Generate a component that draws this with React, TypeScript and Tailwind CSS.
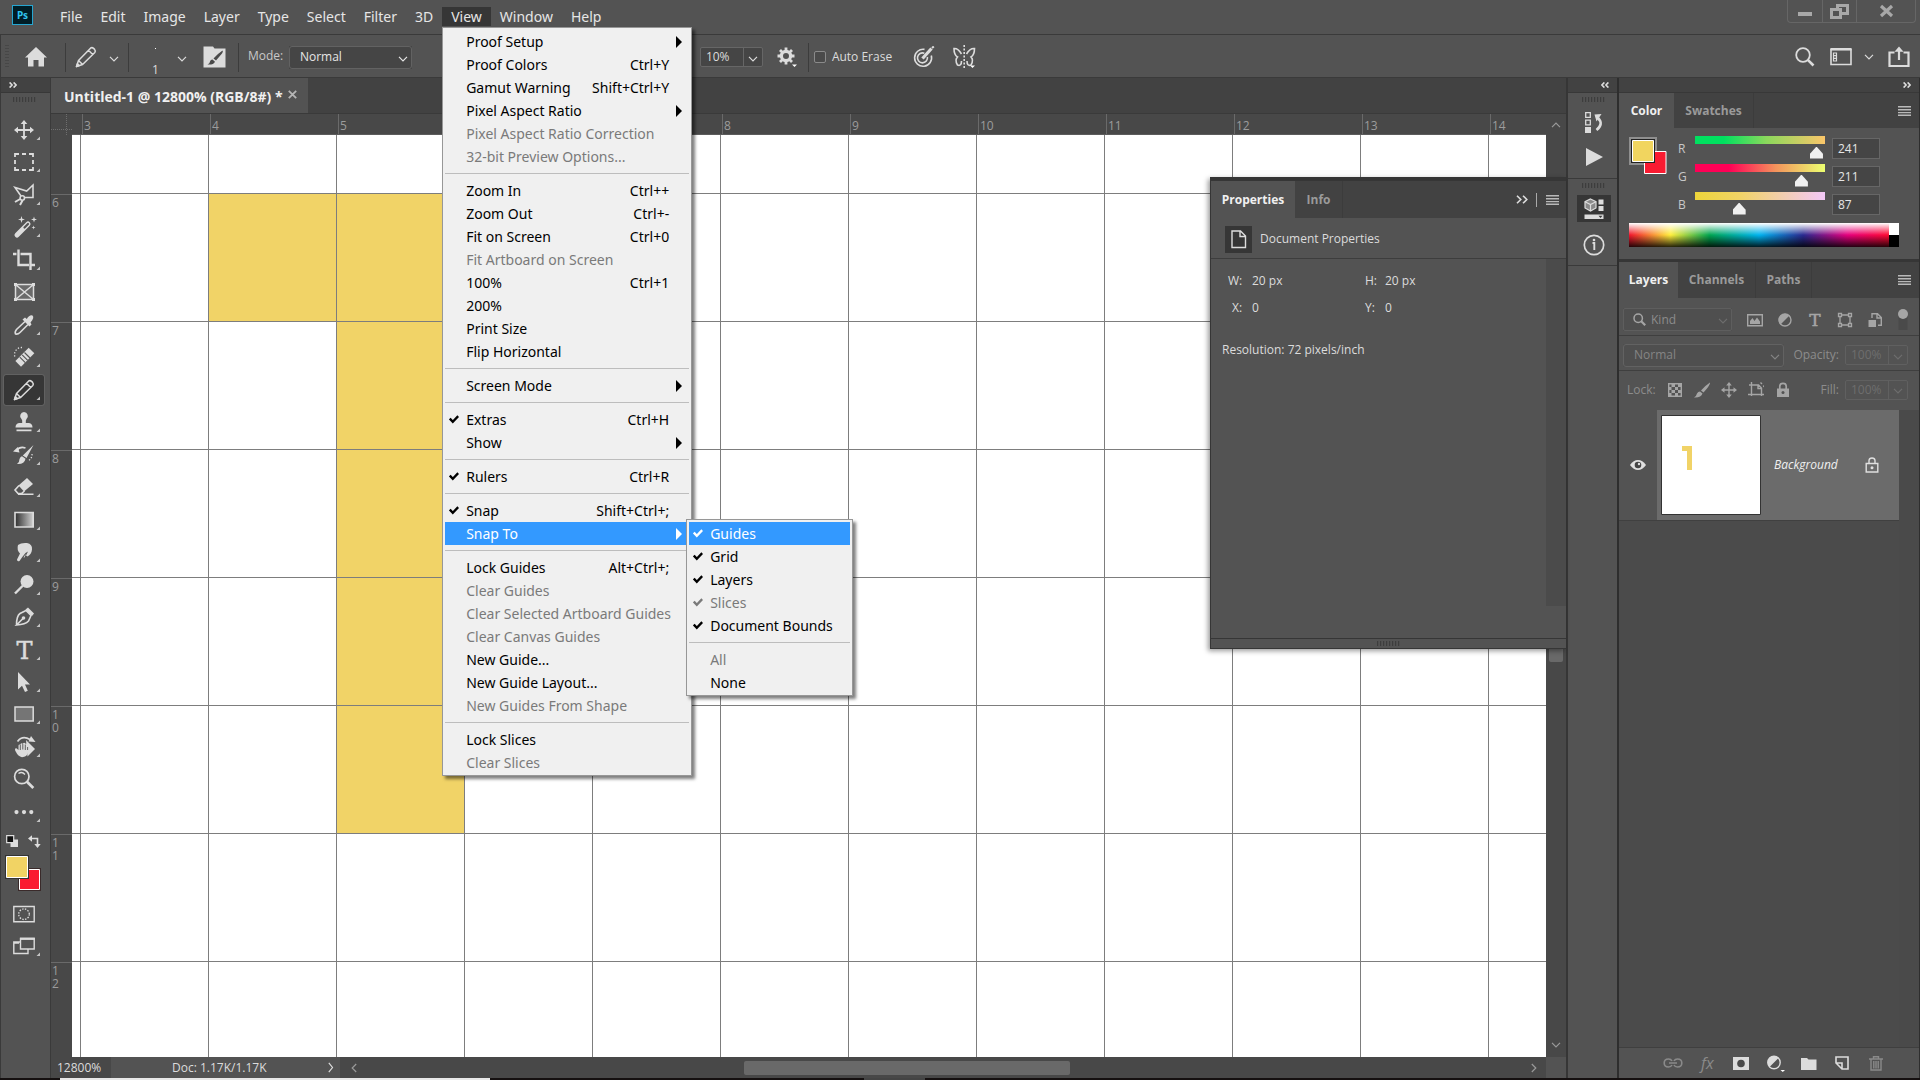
import { useState, type ReactNode } from 'react'
import clsx from 'clsx'

interface MenuEntry {
  label: string
  keys?: string
  disabled?: boolean
  checked?: boolean
  arrow?: boolean
  sub?: MenuItem[]
}

type MenuItem = MenuEntry | 'sep'

const snapMenu: MenuItem[] = [
  { label: 'Guides', checked: true },
  { label: 'Grid', checked: true },
  { label: 'Layers', checked: true },
  { label: 'Slices', checked: true, disabled: true },
  { label: 'Document Bounds', checked: true },
  'sep',
  { label: 'All', disabled: true },
  { label: 'None' },
]

const viewMenu: MenuItem[] = [
  { label: 'Proof Setup', arrow: true },
  { label: 'Proof Colors', keys: 'Ctrl+Y' },
  { label: 'Gamut Warning', keys: 'Shift+Ctrl+Y' },
  { label: 'Pixel Aspect Ratio', arrow: true },
  { label: 'Pixel Aspect Ratio Correction', disabled: true },
  { label: '32-bit Preview Options...', disabled: true },
  'sep',
  { label: 'Zoom In', keys: 'Ctrl++' },
  { label: 'Zoom Out', keys: 'Ctrl+-' },
  { label: 'Fit on Screen', keys: 'Ctrl+0' },
  { label: 'Fit Artboard on Screen', disabled: true },
  { label: '100%', keys: 'Ctrl+1' },
  { label: '200%' },
  { label: 'Print Size' },
  { label: 'Flip Horizontal' },
  'sep',
  { label: 'Screen Mode', arrow: true },
  'sep',
  { label: 'Extras', keys: 'Ctrl+H', checked: true },
  { label: 'Show', arrow: true },
  'sep',
  { label: 'Rulers', keys: 'Ctrl+R', checked: true },
  'sep',
  { label: 'Snap', keys: 'Shift+Ctrl+;', checked: true },
  { label: 'Snap To', arrow: true, sub: snapMenu },
  'sep',
  { label: 'Lock Guides', keys: 'Alt+Ctrl+;' },
  { label: 'Clear Guides', disabled: true },
  { label: 'Clear Selected Artboard Guides', disabled: true },
  { label: 'Clear Canvas Guides', disabled: true },
  { label: 'New Guide...' },
  { label: 'New Guide Layout...' },
  { label: 'New Guides From Shape', disabled: true },
  'sep',
  { label: 'Lock Slices' },
  { label: 'Clear Slices', disabled: true },
]

const menus = ['File', 'Edit', 'Image', 'Layer', 'Type', 'Select', 'Filter', '3D', 'View', 'Window', 'Help']

function MenuList({ items, active }: { items: MenuItem[]; active: string }) {
  return (
    <ul role="menu" className="border border-[#979797] bg-[#f0f0f0] px-[2px] pt-[2px] pb-[1px] shadow-[3px_3px_3px_rgba(0,0,0,0.5)]">
      {items.map((item, i) => {
        if (item === 'sep') {
          return (
            <li key={i} role="separator" className="flex h-[11px] items-center">
              <span className="h-px w-full bg-[#bdbdbd]" />
            </li>
          )
        }
        const on = item.label === active
        return (
          <li key={i} role="none" className="relative">
            <button
              type="button"
              role="menuitem"
              disabled={item.disabled}
              className={clsx(
                'flex h-[23px] w-full items-center whitespace-nowrap text-left text-sm',
                on ? 'bg-[#3399ff] text-white' : item.disabled ? 'text-[#7a7a7a]' : 'text-black',
              )}
            >
              <span className="w-[21px] shrink-0 pl-1">
                {item.checked && (
                  <svg width="10" height="9" viewBox="0 0 10 9" fill="none" stroke="currentColor" strokeWidth="2.4">
                    <path d="M.8 3.6 3.8 6.8 9.2 1.2" />
                  </svg>
                )}
              </span>
              <span className="grow">{item.label}</span>
              <span>{item.keys}</span>
              <span className="flex w-5 shrink-0 justify-center">
                {item.arrow && (
                  <svg width="6" height="12" viewBox="0 0 6 12" fill="currentColor">
                    <path d="M0 0 6 6 0 12z" />
                  </svg>
                )}
              </span>
            </button>
            {item.sub && (
              <div className="absolute -top-[3px] left-[241px] z-10 w-[167px]">
                <MenuList items={item.sub} active="Guides" />
              </div>
            )}
          </li>
        )
      })}
    </ul>
  )
}

function MenuBar() {
  return (
    <header className="flex h-[34px] shrink-0 items-start bg-[#535353] pl-3 font-['Noto_Sans',sans-serif] text-[#e6e6e6]">
      <div className="mt-[5px] flex h-[20px] w-[21px] items-center justify-center border border-[#26a6d1] bg-[#001d26] text-[10px] font-bold text-[#31c5f0]">
        Ps
      </div>
      <nav className="mt-[7px] ml-[18px] flex">
        {menus.map((m) => (
          <div key={m} className="relative">
            <button type="button" className={clsx('block h-[19px] px-[9px] text-sm leading-[18px]', m === 'View' && 'bg-[#363636]')}>
              {m}
            </button>
            {m === 'View' && (
              <div className="absolute top-[20px] left-0 z-30 w-[250px]">
                <MenuList items={viewMenu} active="Snap To" />
              </div>
            )}
          </div>
        ))}
      </nav>
      <div className="mr-[4px] ml-auto flex h-[23px] rounded-b border border-t-0 border-[#666] text-[#a8a8a8]">
        <button type="button" aria-label="Minimize" className="w-[35px] border-r border-[#666]">
          <svg width="34" height="22" fill="currentColor">
            <path d="M10 12h14v4H10z" />
          </svg>
        </button>
        <button type="button" aria-label="Restore" className="w-[34px] border-r border-[#666]">
          <svg width="33" height="22" fill="none" stroke="currentColor" strokeWidth="3">
            <path d="M8.500 9.500h9v8h-9zM14.500 9V5.500h10v8H18" />
          </svg>
        </button>
        <button type="button" aria-label="Close" className="w-[58px]">
          <svg width="58" height="22" fill="none" stroke="currentColor" strokeWidth="3.200">
            <path d="M24 6 35 16M35 6 24 16" />
          </svg>
        </button>
      </div>
    </header>
  )
}

function Chevron({ className }: { className?: string }) {
  return (
    <svg width="10" height="6" viewBox="0 0 10 6" fill="none" stroke="currentColor" strokeWidth="1.2" className={className}>
      <path d="M1 .8 5 4.800 9 .8" />
    </svg>
  )
}

function Picker({ label, value, className }: { label: string; value: string; className: string }) {
  return (
    <div className={clsx('relative', className)}>
      <select
        aria-label={label}
        defaultValue={value}
        className="h-full w-full appearance-none rounded-[3px] border border-[#626262] bg-inherit pl-[10px]"
      >
        <option>{value}</option>
      </select>
      <Chevron className="pointer-events-none absolute top-[10px] right-1" />
    </div>
  )
}

function Percent({ label, value, className }: { label: string; value: string; className: string }) {
  return (
    <div className={clsx('flex rounded-[2px] border', className)}>
      <input aria-label={label} defaultValue={value} className="w-[43px] border-r border-inherit bg-transparent pl-[5px] outline-none" />
      <button type="button" aria-label={`${label} slider`} className="flex w-[18px] items-center justify-center pt-[3px]">
        <Chevron />
      </button>
    </div>
  )
}

function Grip() {
  return (
    <svg width="23" height="5" className="text-[#3d3d3d]" fill="none" stroke="currentColor" strokeWidth="1.2" aria-hidden="true">
      <path d="M.6 0v5M3.600 0v5M6.600 0v5M9.600 0v5M12.600 0v5M15.600 0v5M18.600 0v5M21.600 0v5" />
    </svg>
  )
}

function DoubleArrow({ left }: { left?: boolean }) {
  return (
    <svg width="8" height="6" viewBox="0 0 8 6" fill="none" stroke="#ddd" strokeWidth="1.6" aria-hidden="true">
      <path d={left ? 'M3.400.4.9 3l2.500 2.600M7.400.4 4.900 3l2.500 2.600' : 'M.6.4 3.100 3 .6 5.600M4.600.4 7.100 3 4.600 5.600'} />
    </svg>
  )
}

function Pencil() {
  return (
    <g fill="none" stroke="currentColor" strokeWidth="1.5" strokeLinejoin="round">
      <path d="M1.500 20.500 3.500 14.500 15.500 2.200Q17 1 18.600 2.400L19.600 3.400Q21 5 19.800 6.500L7.600 18.500zM13.500 4.300 17.700 8.500M3.500 14.500 7.600 18.500" />
      <path d="M1.500 20.500 2.400 17.800 4.200 19.600z" fill="currentColor" />
    </g>
  )
}

function Divider() {
  return <span className="block h-[29px] w-px bg-[#3c3c3c]" />
}

function OptionsBar() {
  return (
    <div className="flex h-[44px] shrink-0 items-center border-y border-l border-[#3a3a3a] bg-[#535353] pt-[2px] text-xs text-[#dcdcdc]">
      <svg width="4" height="24" className="ml-[4px]" aria-hidden="true">
        <path d="M1 0v24M3 0v24" stroke="#3d3d3d" strokeDasharray="1 2" />
      </svg>
      <button type="button" aria-label="Home" className="ml-[16px]">
        <svg width="22" height="20" viewBox="0 0 22 20" fill="currentColor">
          <path d="M11 0 22 10.500H19V19.500H13.500V13H8.500V19.500H3V10.500H0z" />
        </svg>
      </button>
      <span className="ml-[18px]"><Divider /></span>
      <button type="button" aria-label="Pencil presets" className="ml-[9px] flex items-center gap-[12px]">
        <svg width="22" height="22" viewBox="0 0 22 22">
          <Pencil />
        </svg>
        <Chevron className="mt-1" />
      </button>
      <span className="ml-[9px]"><Divider /></span>
      <button type="button" aria-label="Brush preset" className="ml-[23px] flex items-center gap-[18px]">
        <span className="flex h-9 flex-col items-center justify-between">
          <span className="mt-[9px] h-px w-px bg-white" />
          <span className="text-xs leading-[10px]">1</span>
        </span>
        <Chevron className="mt-1" />
      </button>
      <button type="button" aria-label="Brush settings" className="mr-[12px] ml-[16px]">
        <svg width="23" height="22" viewBox="0 0 23 22">
          <path d="M.5.500H10l1.500 2H22.500V21.500H.500z" fill="#dcdcdc" />
          <path d="M19.500 4.500Q20.500 5.500 19 7.500L13 14.500 10.500 12.500Q15 7.500 19.500 4.500M9.500 13.500 12 15.700Q10.500 19 4.500 18.500 7 17.500 7 15.500 7.500 13.500 9.500 13.500" fill="#4a4a4a" />
        </svg>
      </button>
      <Divider />
      <span className="ml-[9px] w-[41px] pb-[2px] text-xs text-[#c8c8c8]">Mode:</span>
      <Picker label="Mode" value="Normal" className="h-[23px] w-[123px] bg-[#454545] text-xs text-[#e6e6e6]" />
      <Percent label="Smoothing" value="10%" className="ml-[288px] h-[20px] border-[#666] bg-[#454545]" />
      <button type="button" aria-label="Smoothing options" className="ml-[14px]">
        <svg width="22" height="22" viewBox="0 0 22 22" fill="none" stroke="currentColor">
          <circle cx="9" cy="10" r="4.600" strokeWidth="3.200" />
          <path d="M9 1.500v4M9 14.500v4M.5 10h4M13.500 10h4M3 4l3 3M12 13l3 3M3 16l3-3M12 7l3-3" strokeWidth="2.800" />
          <path d="M15 18.500h5l-2.500 2.500z" fill="#fff" stroke="none" />
        </svg>
      </button>
      <span className="ml-[9px]"><Divider /></span>
      <label className="ml-[5px] flex items-center gap-[6px]">
        <input type="checkbox" className="h-3 w-3 appearance-none rounded-[2px] border border-[#8a8a8a] bg-[#4a4a4a]" />
        Auto Erase
      </label>
      <button type="button" aria-label="Pressure for size" className="ml-[21px]">
        <svg width="22" height="22" viewBox="0 0 22 22" fill="none" stroke="currentColor" strokeWidth="1.600">
          <path d="M11.500 3.400A8.500 8.500 0 1 0 18.300 9.500M11.300 7.200A5 5 0 1 0 14.400 11" />
          <path d="M9.500 12.500 18.500 2.500" strokeWidth="3.200" />
          <path d="M19 2 20.800.4" strokeWidth="2" />
        </svg>
      </button>
      <button type="button" aria-label="Symmetry" className="ml-[18px]">
        <svg width="23" height="24" viewBox="0 0 23 24" fill="none" stroke="currentColor" strokeWidth="1.600">
          <path d="M8.500 9Q5 3 1 3.500 1 10 4.500 12 1.500 15 4.500 20 8.500 21.500 8.500 16M13.500 9Q17 3 21.500 3.500 21.500 10 18 12 21 15 18 20 14 21.500 14 16" />
          <path d="M11.200 0v24" strokeDasharray="2 1.500" />
          <path d="M17 20.500h5l-2.500 2.500z" fill="#fff" stroke="none" />
        </svg>
      </button>
      <div className="mr-[10px] ml-auto flex items-center">
        <button type="button" aria-label="Search">
          <svg width="20" height="20" viewBox="0 0 20 20" fill="none" stroke="currentColor">
            <circle cx="8" cy="8" r="6.800" strokeWidth="1.800" />
            <path d="M12.800 12.800 18.500 18.500" strokeWidth="2.600" />
          </svg>
        </button>
        <button type="button" aria-label="Workspace" className="ml-[15px] flex items-center gap-[12px]">
          <svg width="22" height="18" viewBox="0 0 22 18" fill="none" stroke="currentColor">
            <path d="M1 1.500H21V16.500H1z" strokeWidth="1.600" />
            <path d="M.5 1.200H21.500" strokeWidth="2.400" />
            <path d="M3.500 5h3v8h-3zM3.500 7.600h3M3.500 10.300h3" strokeWidth="1.200" />
          </svg>
          <Chevron />
        </button>
        <button type="button" aria-label="Share" className="ml-[14px]">
          <svg width="22" height="22" viewBox="0 0 22 22" fill="none" stroke="currentColor" strokeWidth="2.200">
            <path d="M6.500 6.500H1.500V20H20.500V6.500H15.500M11 14V3" />
            <path d="M6.500 5.800 11 .5 15.500 5.800z" fill="currentColor" stroke="none" />
          </svg>
        </button>
      </div>
    </div>
  )
}

const stroke = { fill: 'none', stroke: 'currentColor', strokeWidth: 1.6 }

// every glyph is drawn on a 22 x 22 box
const tools: { name: string; flat?: boolean; icon: ReactNode }[] = [
  {
    name: 'Move',
    icon: (
      <>
        <path d="M11 3v16M3 11h16" {...stroke} strokeWidth="1.800" />
        <path d="M11 1 14.300 5H7.700zM11 21 14.300 17H7.700zM1 11 5 7.700v6.600zM21 11 17 7.700v6.600z" fill="currentColor" />
      </>
    ),
  },
  { name: 'Marquee', icon: <path d="M2 6V3H6M9 3H13M16 3H20V6M20 9V13M20 16V19H16M13 19H9M6 19H2V16M2 13V9" {...stroke} strokeWidth="1.800" /> },
  {
    name: 'Polygonal Lasso',
    icon: (
      <g {...stroke}>
        <path d="M8 12 2 3.500 13.700 7 20 1V13.500H12" />
        <circle cx="9.300" cy="14" r="2.200" />
        <path d="M7.200 15 2 18M9.500 16.500 7 21" strokeWidth="2" />
      </g>
    ),
  },
  {
    name: 'Magic Wand',
    icon: (
      <>
        <path d="M4 19 15 8" stroke="currentColor" strokeWidth="5" strokeLinecap="round" />
        <path d="M11.500 11.500 15 8" stroke="#535353" strokeWidth="2.200" strokeLinecap="round" />
        <path d="M8.500 0 9.300 2.700 12 3.500 9.300 4.300 8.500 7 7.700 4.300 5 3.500 7.700 2.700zM21 .5 21.700 2.800 24 3.500 21.700 4.200 21 6.500 20.300 4.200 18 3.500 20.300 2.800zM20.500 9.500 21 11 22.500 11.500 21 12 20.500 13.500 20 12 18.500 11.500 20 11z" fill="currentColor" />
      </>
    ),
  },
  { name: 'Crop', icon: <path d="M5.500 0.500V16H16M18.500 16H22M0 5H3.500M7.500 5H17.500V21" {...stroke} strokeWidth="2.400" /> },
  {
    name: 'Frame',
    flat: true,
    icon: (
      <>
        <path d="M3 4H20V18H3z" fill="#6a6a6a" />
        <path d="M2.500 3.500H20.500V18.500H2.500zM2.500 3.500 20.500 18.500M20.500 3.500 2.500 18.500" {...stroke} strokeWidth="1.500" />
        <path d="M1 2h3v3H1zM19 2h3v3h-3zM1 17h3v3H1zM19 17h3v3h-3z" fill="currentColor" />
      </>
    ),
  },
  {
    name: 'Eyedropper',
    icon: (
      <>
        <path d="M12 7.500 3.500 15.500Q1.500 18 2.500 20 5 20.500 7 18.500L15 10.500" {...stroke} />
        <path d="M9.500 5.500 12 3.500 13.800 5Q16.500.5 19.500 1.500 21.800 3.500 17.500 8.500L18.500 10.500 16.500 12.500z" fill="currentColor" />
      </>
    ),
  },
  {
    name: 'Healing Brush',
    icon: (
      <>
        <path d="M5.200 17.800 18.500 4.500" stroke="currentColor" strokeWidth="8" />
        <path d="M6.800 11.200 12.300 16.700M11.500 6.500 17 12M9.200 8.800 14.700 14.300" stroke="#535353" strokeWidth="1.100" />
        <path d="M9 1.500A7 7 0 0 0 2 11" {...stroke} strokeWidth="1.300" strokeDasharray="1.300 1.700" />
      </>
    ),
  },
  { name: 'Pencil', icon: <Pencil /> },
  {
    name: 'Clone Stamp',
    icon: <path d="M11 1A4 4 0 0 1 13.500 8Q12.500 9 12.800 12H16Q19.500 12.500 19.500 16.500H2.500Q2.500 12.500 6 12H9.200Q9.500 9 8.500 8A4 4 0 0 1 11 1M3.500 18.500h15v1.700h-15z" fill="currentColor" />,
  },
  {
    name: 'History Brush',
    icon: (
      <>
        <path d="M20.500 1 13.500 14 9.800 11.500zM9 12.200 12.500 14.700Q11.500 20.500 4 20 6.500 18.500 6.500 15 7.500 12.500 9 12.200" fill="currentColor" />
        <path d="M3.500 6.500Q7 2 12.500 4" {...stroke} />
        <path d="M0 7.500 4.800 3 6.500 8.500z" fill="currentColor" />
        <path d="M19 10Q19.500 14 15 17" {...stroke} strokeWidth="1.300" strokeDasharray="1.300 1.700" />
      </>
    ),
  },
  {
    name: 'Eraser',
    icon: (
      <>
        <path d="M14 2 20 8 11 15.500 5.500 9.500z" fill="currentColor" />
        <path d="M6 9.500 2 14 5 17.500H8.500L11.500 15M5 18.200H20.500" {...stroke} />
      </>
    ),
  },
  {
    name: 'Gradient',
    icon: (
      <>
        <defs>
          <linearGradient id="tool-gradient">
            <stop offset="0" stopColor="#2e2e2e" />
            <stop offset="1" stopColor="#d0d0d0" />
          </linearGradient>
        </defs>
        <path d="M2 3.500H20.200V18H2z" fill="url(#tool-gradient)" stroke="currentColor" strokeWidth="1.600" />
      </>
    ),
  },
  {
    name: 'Smudge',
    icon: (
      <path d="M5 4Q8 1.500 14 2 19.500 3 19 8.500 18.500 13.500 14.500 15.500L13 14.500 15 10.500 12.500 12Q9.500 15.500 6.500 20 4 21 4 18.500L7 12.500Q3.500 9 5 4M10.500 16.500Q12 13.500 13 13L11.500 16.500z" fill="currentColor" />
    ),
  },
  {
    name: 'Dodge',
    icon: (
      <>
        <circle cx="14" cy="7.500" r="6.500" fill="currentColor" />
        <path d="M10 11.500 2 19.500" stroke="currentColor" strokeWidth="2.400" />
      </>
    ),
  },
  {
    name: 'Pen',
    icon: (
      <>
        <path d="M3.500 19Q3.500 10 7 7.500L13 4.500 18 9.500 15.500 15Q12.500 18.500 3.500 19L10 12.500" {...stroke} />
        <circle cx="10.500" cy="12" r="1.800" fill="currentColor" />
        <path d="M12.500 3.500 15 1.500 21 7.500 19 10z" fill="currentColor" />
      </>
    ),
  },
  {
    name: 'Type',
    icon: (
      <text x="11.500" y="19.500" textAnchor="middle" fontFamily="'DejaVu Serif', serif" fontSize="24" fill="currentColor" stroke="currentColor" strokeWidth=".5">
        T
      </text>
    ),
  },
  { name: 'Path Selection', icon: <path d="M5 1V18.500L9 14.700 12 21 14.800 19.700 12 13.500H17z" fill="currentColor" /> },
  { name: 'Rectangle', icon: <path d="M2 4H20.200V18H2z" fill="#757575" stroke="currentColor" strokeWidth="1.500" /> },
  {
    name: 'Rotate View',
    icon: (
      <>
        <path d="M13 4 22 13 14.500 20.500z" fill="currentColor" />
        <path d="M4.500 5.500Q9.500-1 17 3.500" {...stroke} />
        <path d="M15.500 5.500 18 0 22.500 6z" fill="currentColor" />
        <path d="M3 12Q1 13 3 16 5 20.500 9 21.200 14 21 15 16.500L16.500 11Q15.500 9.500 14.500 11V8.500Q13.500 7 12.500 8V7.500Q11 6 10 7.500V8Q8.500 6.500 7.500 8V9Q6 8 5.500 9.500V14z" fill="currentColor" />
        <path d="M7.300 9v5M9.800 8v5.500M12.300 8.500V14M14.600 11V14" stroke="#535353" strokeWidth=".9" />
      </>
    ),
  },
  {
    name: 'Zoom',
    flat: true,
    icon: (
      <g fill="none" stroke="currentColor">
        <circle cx="8.800" cy="8.500" r="7.200" strokeWidth="1.700" />
        <path d="M14 13.800 20.300 20" strokeWidth="2.800" />
        <path d="M5.500 5.500Q9 3 12 6.500" strokeWidth="1.300" />
      </g>
    ),
  },
  {
    name: 'Edit Toolbar',
    icon: <path d="M3.500 9a2 2 0 1 1 0 4.200 2 2 0 1 1 0-4.200M11 9a2 2 0 1 1 0 4.200 2 2 0 1 1 0-4.200M18.300 9a2 2 0 1 1 0 4.200 2 2 0 1 1 0-4.200" fill="currentColor" />,
  },
]

function ToolButton({ name, icon, on, flat, onClick }: { name: string; icon: ReactNode; on?: boolean; flat?: boolean; onClick?: () => void }) {
  return (
    <button
      type="button"
      aria-label={name}
      aria-pressed={on}
      onClick={onClick}
      className={clsx('h-[30px] w-10 rounded-[2px] text-[#dcdcdc]', on && 'bg-[#363636] outline outline-[#616161]')}
    >
      <svg width="40" height="30" viewBox="0 0 40 30">
        <g transform="translate(9 4)">{icon}</g>
        {!flat && <path d="M36 21.500V25H32.500z" fill="#c4c4c4" />}
      </svg>
    </button>
  )
}

function ToolBar() {
  const [tool, setTool] = useState('Pencil')
  return (
    <aside className="flex w-[51px] shrink-0 flex-col border-r border-l border-[#3a3a3a] bg-[#535353]">
      <div className="flex h-[15px] items-center border-b border-[#383838] bg-[#424242] pl-2">
        <DoubleArrow />
      </div>
      <div className="flex flex-col items-start pl-[3px]">
        <span className="mt-1 ml-[9px] block"><Grip /></span>
        <div className="mt-[13px] flex h-[712px] flex-col justify-between">
          {tools.map((t) => (
            <ToolButton key={t.name} {...t} on={t.name === tool} onClick={() => setTool(t.name)} />
          ))}
        </div>
        <div className="mt-[8px] ml-[2px] flex gap-[9px]">
          <button type="button" aria-label="Default colors">
            <svg width="13" height="13" viewBox="0 0 13 13">
              <path d="M4.500 4.500H12V12H4.500z" fill="#ddd" />
              <path d="M.7.700H7.700V7.700H.700z" fill="#111" stroke="#ddd" strokeWidth="1.200" />
            </svg>
          </button>
          <button type="button" aria-label="Switch colors">
            <svg width="13" height="13" viewBox="0 0 13 13" fill="#ddd">
              <path d="M3 3.500H9.500V10" fill="none" stroke="#ddd" strokeWidth="1.600" />
              <path d="M0 3.500 4 .3V6.700zM9.500 13 6.300 9H12.700z" />
            </svg>
          </button>
        </div>
        <svg width="37" height="36" viewBox="0 0 37 36" className="mt-[7px] ml-[1px]">
          <path d="M13 13H36V36H13z" fill="#3a2a2a" />
          <path d="M14.500 14.500H34.500V34.500H14.500z" fill="#fa1b31" stroke="#fff" />
          <path d="M0 0H24V24H0z" fill="#333" />
          <path d="M1.500 1.500H22.500V22.500H1.500z" fill="#f1d364" stroke="#fff" />
        </svg>
        <div className="mt-[8px] flex flex-col gap-[2px]">
          <ToolButton
            name="Quick Mask"
            flat
            icon={
              <>
                <path d="M.8 3.500H21.200V18.800H.800z" {...stroke} strokeWidth="1.400" />
                <circle cx="11" cy="11.200" r="5.300" {...stroke} strokeWidth="1.300" strokeDasharray="1.500 1.300" />
              </>
            }
          />
          <ToolButton
            name="Screen Mode"
            icon={
              <g {...stroke} strokeWidth="1.400">
                <path d="M7 7H.8V18.500H15V14M.8 8H6" />
                <path d="M7.500 3.500H21.200V14H7.500z" />
                <path d="M7 3.800H21.800" strokeWidth="2.200" />
              </g>
            }
          />
        </div>
      </div>
    </aside>
  )
}

function Canvas() {
  return (
    <svg width="100%" height="100%" className="block bg-white">
      <defs>
        <pattern id="grid" x="8" y="58" width="128" height="128" patternUnits="userSpaceOnUse">
          <path d="M.5 0V128M0 .5H128" stroke="#7d7d7d" fill="none" />
        </pattern>
      </defs>
      <path d="M136 58H392V698H264V186H136z" fill="#f1d367" />
      <rect width="100%" height="100%" fill="url(#grid)" />
    </svg>
  )
}

function PropertiesPanel() {
  return (
    <section className="absolute top-[99px] right-0 z-10 flex h-[472px] w-[356px] flex-col border-t-4 border-l border-[#363636] bg-[#535353] text-xs text-[#dcdcdc] shadow-[-2px_2px_5px_rgba(0,0,0,0.4)]">
      <div className="flex h-[37px] shrink-0 items-stretch bg-[#424242]">
        <button type="button" className="w-[84px] bg-[#535353] font-bold text-[#f0f0f0]">Properties</button>
        <button type="button" className="w-[48px] border-r border-[#3c3c3c] font-bold text-[#9a9a9a]">Info</button>
        <div className="mr-[7px] ml-auto flex items-center">
          <svg width="12" height="9" viewBox="0 0 12 9" fill="none" stroke="#ddd" strokeWidth="1.600" aria-hidden="true">
            <path d="M1 .7 4.800 4.500 1 8.300M7 .7 10.800 4.500 7 8.300" />
          </svg>
          <span className="mr-[9px] ml-[8px] h-[14px] w-px bg-[#aaa]" />
          <PanelMenu />
        </div>
      </div>
      <div className="flex h-[41px] shrink-0 items-center border-b border-[#3d3d3d] pt-[2px] pl-[14px]">
        <svg width="27" height="27" viewBox="0 0 27 27">
          <path d="M0 0H27V27H0z" fill="#363636" />
          <path d="M7 5H15.500L20.500 10V21.500H7zM15 5.500V10.500H20" fill="none" stroke="#ddd" strokeWidth="1.400" />
        </svg>
        <h2 className="ml-2">Document Properties</h2>
      </div>
      <div className="flex grow border-b border-[#363636]">
        <div className="grow pt-[13px] pl-[11px]">
          <dl className="grid grid-cols-[24px_113px_20px_80px] gap-y-[9px] pl-[6px] leading-[18px]">
            <dt>W:</dt>
            <dd>20 px</dd>
            <dt>H:</dt>
            <dd>20 px</dd>
            <dt className="pl-1">X:</dt>
            <dd>0</dd>
            <dt>Y:</dt>
            <dd>0</dd>
          </dl>
          <p className="mt-[24px] leading-[18px]">Resolution: 72 pixels/inch</p>
        </div>
        <div className="mb-8 w-[20px] bg-[#4b4b4b]" />
      </div>
      <div className="flex h-[10px] shrink-0 items-center justify-center border-b border-[#363636] bg-[#535353]">
        <Grip />
      </div>
    </section>
  )
}

function PanelMenu() {
  return (
    <button type="button" aria-label="Panel menu">
      <svg width="13" height="10" viewBox="0 0 13 10" fill="#b9b9b9" className="block">
        <path d="M0 0h13v1.500H0zM0 3h13v1.500H0zM0 6h13v1.300H0zM0 8.600h13V10H0z" />
      </svg>
    </button>
  )
}

function DocumentArea() {
  return (
    <main className="relative flex min-w-0 grow flex-col border-r-2 border-[#363636] bg-[#484848]">
      <div className="flex h-[36px] shrink-0 border-b border-[#3a3a3a] bg-[#424242]">
        <div className="flex items-center bg-[#535353] pt-[2px] pr-[11px] pl-[13px] text-[#f0f0f0]">
          <span className="text-sm font-bold">Untitled-1 @ 12800% (RGB/8#) *</span>
          <button type="button" aria-label="Close document" className="mb-1 ml-[5px]">
            <svg width="9" height="9" viewBox="0 0 9 9" fill="none" stroke="#b5b5b5" strokeWidth="1.800" className="block">
              <path d="M.8.800 8.200 8.200M8.200.800.800 8.200" />
            </svg>
          </button>
        </div>
      </div>
      <div className="grid min-h-0 grow grid-cols-[21px_1fr_20px] grid-rows-[21px_1fr]">
        <svg width="21" height="21" aria-hidden="true">
          <path d="M15.500 0V21M0 15.500H21" stroke="#6e6e6e" strokeDasharray="1 1" />
        </svg>
        <div className="flex overflow-hidden border-b border-[#5c5c5c] pl-[10px] text-xs text-[#9c9c9c]">
          {[3, 4, 5, 6, 7, 8, 9, 10, 11, 12, 13, 14].map((n) => (
            <span key={n} className="w-32 shrink-0 border-l border-[#6a6a6a] pl-px leading-[24px]">{n}</span>
          ))}
        </div>
        <div className="flex justify-center pt-2">
          <Chevron className="rotate-180 text-[#9a9a9a]" />
        </div>
        <div className="overflow-hidden pt-[59px] text-xs text-[#9c9c9c]">
          {[6, 7, 8, 9, 10, 11, 12].map((n) => (
            <div key={n} className="flex h-32 flex-col border-t border-[#6a6a6a] pt-px pl-px leading-[13px]">
              {String(n).split('').map((d, i) => (
                <span key={i}>{d}</span>
              ))}
            </div>
          ))}
        </div>
        <div className="min-h-0 overflow-hidden">
          <Canvas />
        </div>
        <div className="flex flex-col items-center justify-between pb-[9px]">
          <span className="mt-[200px] h-[327px] w-[14px] rounded-b-[2px] bg-[#696969]" />
          <Chevron className="text-[#9a9a9a]" />
        </div>
      </div>
      <footer className="flex h-[21px] shrink-0 items-center text-xs text-[#dcdcdc]">
        <label className="flex w-[60px] items-center self-stretch pl-[6px]">
          <input aria-label="Zoom level" defaultValue="12800%" className="w-full bg-transparent outline-none" />
        </label>
        <div className="flex w-[229px] items-center justify-between self-stretch bg-[#535353] pr-[6px] pl-[61px]">
          <span>Doc: 1.17K/1.17K</span>
          <svg width="6" height="11" viewBox="0 0 6 11" fill="none" stroke="#ddd" strokeWidth="1.200">
            <path d="M.8.800 4.500 5.500.8 10.200" />
          </svg>
        </div>
        <div className="flex grow items-center self-stretch pr-[7px] pl-[9px] text-[#9a9a9a]">
          <Chevron className="rotate-90" />
          <div className="flex grow justify-center">
            <span className="mr-[75px] h-[14px] w-[326px] rounded-[2px] bg-[#696969]" />
          </div>
          <Chevron className="-rotate-90" />
        </div>
        <span className="w-[20px] self-stretch bg-[#535353]" />
      </footer>
      <PropertiesPanel />
    </main>
  )
}

function IconDock() {
  return (
    <aside className="flex w-[49px] shrink-0 flex-col bg-[#535353] text-[#dcdcdc]">
      <div className="flex h-[15px] items-center justify-end border-b border-[#383838] bg-[#424242] pr-[8px]">
        <DoubleArrow left />
      </div>
      <div className="flex h-[86px] flex-col items-center border-b border-[#3a3a3a] pt-[4px] pl-[2px]">
        <Grip />
        <button type="button" aria-label="History" className="mt-[9px]">
          <svg width="20" height="22" viewBox="0 0 20 22" fill="none" stroke="currentColor" strokeWidth="1.300" className="block">
            <path d="M1.700 1.700H6.300V6.300H1.700zM1.700 9.200H6.300V13.800H1.700z" />
            <path d="M1 16h6v6H1z" fill="currentColor" stroke="none" />
            <path d="M14 7Q20 13 12.500 19" strokeWidth="2.600" />
            <path d="M10.500 3.500 17.500 3 12.500 10.500z" fill="currentColor" stroke="none" />
          </svg>
        </button>
        <button type="button" aria-label="Actions" className="mt-[15px]">
          <svg width="18" height="18" viewBox="0 0 18 18" fill="currentColor" className="block">
            <path d="M1 0 18 9 1 18z" />
          </svg>
        </button>
      </div>
      <div className="flex h-[87px] flex-col items-center border-b border-[#3a3a3a] pt-[4px] pl-[2px]">
        <Grip />
        <button type="button" aria-label="Properties" className="mt-[7px] flex h-[27px] w-[34px] items-center justify-center bg-[#363636]">
          <svg width="20" height="22" viewBox="0 0 20 22">
            <path d="M6.500 1 12 3.700V10L6.500 13 1 10V3.700z" fill="#8a8a8a" stroke="#dcdcdc" strokeWidth="1.200" />
            <path d="M1 3.700 6.500 6.500 12 3.700M6.500 6.500V13" fill="none" stroke="#dcdcdc" strokeWidth="1.200" />
            <path d="M14.500 1.500h5v5h-5zM14.500 8h5v5h-5zM.5 16.500h19V21H.5z" fill="#dcdcdc" />
            <path d="M14.500 17.800h4l-2 2.200z" fill="#363636" />
          </svg>
        </button>
        <button type="button" aria-label="Info" className="mt-[12px]">
          <svg width="22" height="22" viewBox="0 0 22 22" fill="none" stroke="currentColor" className="block">
            <circle cx="11" cy="11" r="9.700" strokeWidth="1.700" />
            <path d="M9.500 9H11.300V16" strokeWidth="1.900" />
            <circle cx="11" cy="6" r="1.300" fill="currentColor" stroke="none" />
          </svg>
        </button>
      </div>
    </aside>
  )
}

const channels = [
  { name: 'R', value: 241, bar: 'bg-[linear-gradient(90deg,#00e060_0%,#00e060_22%,#8bd85c_55%,#fbc66a_100%)]' },
  { name: 'G', value: 211, bar: 'bg-[linear-gradient(90deg,#ff0056_0%,#ff0056_26%,#f3935c_62%,#ecff70_100%)]' },
  { name: 'B', value: 87, bar: 'bg-[linear-gradient(90deg,#eed53a_0%,#f1d367_35%,#f3c8f8_100%)]' },
]

function ColorPanel() {
  const [rgb, setRgb] = useState(channels.map((c) => c.value))
  const change = (i: number, v: number) => setRgb(rgb.map((old, j) => (j === i ? v : old)))

  return (
    <section className="flex h-[168px] shrink-0 flex-col border-b-2 border-[#363636]">
      <div className="flex h-[35px] shrink-0 bg-[#424242] text-xs font-bold">
        <button type="button" className="w-[55px] bg-[#535353] text-[#f0f0f0]">Color</button>
        <button type="button" className="w-[80px] border-r border-[#3c3c3c] text-[#9a9a9a]">Swatches</button>
        <div className="mr-[8px] ml-auto flex items-center"><PanelMenu /></div>
      </div>
      <div className="flex pt-[9px] pl-[10px]">
        <svg width="38" height="38" viewBox="0 0 38 38">
          <path d="M0 0H28V28H0z" fill="#8f8f8f" />
          <path d="M15.500 14.500H37V36.500H15.500z" fill="#fa1b31" stroke="#fff" />
          <path d="M2 2H26V26H2z" fill="#222" />
          <path d="M3.500 3.500H24.500V24.500H3.500z" fill="#f1d55f" stroke="#fff" />
        </svg>
        <div className="ml-[11px] flex flex-col gap-[7px] pt-[1px]">
          {channels.map((c, i) => (
            <div key={c.name} className="flex h-[21px] items-center">
              <label htmlFor={`slider-${c.name}`} className="w-[17px] text-xs text-[#c8c8c8]">{c.name}</label>
              <div className="h-[25px] w-[130px]">
                <div className={clsx('h-[8px] w-full', c.bar)} />
                <input
                  id={`slider-${c.name}`}
                  type="range"
                  max={255}
                  value={rgb[i]}
                  onChange={(e) => change(i, Number(e.target.value))}
                  className="-mx-[6px] mt-[2px] block h-[13px] w-[141px] appearance-none bg-transparent [&::-webkit-slider-thumb]:h-[12px] [&::-webkit-slider-thumb]:w-[13px] [&::-webkit-slider-thumb]:appearance-none [&::-webkit-slider-thumb]:bg-[#f0f0f0] [&::-webkit-slider-thumb]:[clip-path:polygon(50%_0,100%_60%,100%_100%,0_100%,0_60%)]"
                />
              </div>
              <input
                aria-label={`${c.name} value`}
                value={rgb[i]}
                onChange={(e) => change(i, Number(e.target.value) || 0)}
                className="ml-[7px] h-[21px] w-[48px] border border-[#666] bg-[#454545] pl-[5px] text-xs text-[#e6e6e6] outline-none"
              />
            </div>
          ))}
        </div>
      </div>
      <div className="mt-[8px] ml-[10px] flex h-[24px]">
        <div className="w-[260px] bg-[linear-gradient(180deg,#fff_0%,rgba(255,255,255,0)_50%,rgba(0,0,0,0)_50%,rgba(0,0,0,0.85)_100%),linear-gradient(90deg,#f0142d_0%,#ffee3c_16%,#00a550_31%,#00b4f0_50%,#2a2a90_67%,#e6007e_84%,#ff0a32_100%)]" />
        <div className="flex w-[10px] flex-col">
          <span className="grow bg-white" />
          <span className="grow bg-black" />
        </div>
      </div>
    </section>
  )
}

const filterIcons: { name: string; icon: ReactNode }[] = [
  {
    name: 'Pixel layers',
    icon: (
      <>
        <path d="M.7 2.700H15.300V13.700H.700z" {...stroke} strokeWidth="1.400" />
        <path d="M3 12V9L5.500 6 7.500 9 10 5.500 13 9.500V12z" fill="currentColor" />
      </>
    ),
  },
  {
    name: 'Adjustment layers',
    icon: (
      <>
        <circle cx="8" cy="8" r="6" {...stroke} strokeWidth="1.400" />
        <path d="M12.500 3.500A6.300 6.300 0 1 0 3.500 12.500z" fill="currentColor" />
      </>
    ),
  },
  {
    name: 'Type layers',
    icon: (
      <text x="8" y="14" textAnchor="middle" fontFamily="'DejaVu Serif', serif" fontSize="17" fill="currentColor" stroke="currentColor" strokeWidth=".5">
        T
      </text>
    ),
  },
  {
    name: 'Shape layers',
    icon: (
      <g {...stroke} strokeWidth="1.300">
        <path d="M1.500 1.500h3v3h-3zM11.500 1.500h3v3h-3zM1.500 11.500h3v3h-3zM11.500 11.500h3v3h-3zM4.500 3h7M4.500 13h7M3 4.500v7M13 4.500v7" />
      </g>
    ),
  },
  {
    name: 'Smart objects',
    icon: (
      <>
        <path d="M5 6V1.700H10.500L14.300 5.500V13.300H11M10 2V6H14" {...stroke} strokeWidth="1.400" />
        <path d="M1.500 8H9V15H1.500z" fill="currentColor" />
      </>
    ),
  },
]

const lockIcons: { name: string; icon: ReactNode }[] = [
  {
    name: 'Lock transparent pixels',
    icon: (
      <>
        <path d="M1.700 1.700H14.300V14.300H1.700z" {...stroke} strokeWidth="1.400" />
        <path d="M4.500 2H8V5H4.500zM11 2H14V5H11zM2 5H4.500V8H2zM8 5H11V8H8zM4.500 8H8V11H4.500zM11 8H14V11H11zM2 11H4.500V14H2zM8 11H11V14H8z" fill="currentColor" />
      </>
    ),
  },
  {
    name: 'Lock image pixels',
    icon: <path d="M16 .5Q16.500 3 9.500 10.500L7 8.500Q12 3 16 .5M6 9.500 8.500 11.500Q7 16 0 15.500 2.500 14 3 11.500 4 9.500 6 9.500" fill="currentColor" />,
  },
  {
    name: 'Lock position',
    icon: (
      <>
        <path d="M8 2v12M2 8h12" {...stroke} strokeWidth="1.400" />
        <path d="M8 0 10.800 3.500H5.200zM8 16 10.800 12.500H5.200zM0 8 3.500 5.200v5.600zM16 8 12.500 5.200v5.600z" fill="currentColor" />
      </>
    ),
  },
  {
    name: 'Lock artboard',
    icon: (
      <>
        <path d="M3.500 0V14M1 3H10.500L13.500 6V14M0 12.500H16M10 3V6.500H13.500" {...stroke} strokeWidth="1.400" />
        <path d="M12.500.5 14 2M15.500 3.500 16 5" {...stroke} strokeWidth="1.400" />
      </>
    ),
  },
  {
    name: 'Lock all',
    icon: (
      <>
        <path d="M2 6.500H14V15H2z" fill="currentColor" />
        <path d="M4.800 7V4Q5 1.300 8 1.300 11 1.300 11.200 4V7" {...stroke} strokeWidth="1.700" />
        <circle cx="8" cy="10.500" r="1.500" fill="#535353" />
      </>
    ),
  },
]

function LayersPanel() {
  return (
    <section className="flex grow flex-col border-t border-[#363636] bg-[#4b4b4b] text-xs text-[#8c8c8c]">
      <div className="flex h-[36px] shrink-0 bg-[#424242] font-bold text-[#9a9a9a]">
        <button type="button" className="w-[59px] bg-[#535353] text-[#f0f0f0]">Layers</button>
        <button type="button" className="w-[78px] border-r border-[#3c3c3c]">Channels</button>
        <button type="button" className="w-[56px] border-r border-[#3c3c3c]">Paths</button>
        <div className="mr-[8px] ml-auto flex items-center"><PanelMenu /></div>
      </div>
      <div className="flex h-[38px] shrink-0 items-center border-b border-[#3f3f3f] bg-[#535353] pt-[6px] pr-[11px] pl-[4px]">
        <div className="relative h-[23px] w-[109px] bg-[#4f4f4f]">
          <select aria-label="Filter by" defaultValue="Kind" className="h-full w-full appearance-none rounded-[2px] border border-[#5e5e5e] pl-[27px] text-xs">
            <option>Kind</option>
          </select>
          <svg width="13" height="13" viewBox="0 0 13 13" fill="none" stroke="#a5a5a5" className="pointer-events-none absolute top-[5px] left-[10px]">
            <circle cx="5.200" cy="5.200" r="4.200" strokeWidth="1.500" />
            <path d="M8.200 8.200 12.200 12.200" strokeWidth="2.200" />
          </svg>
          <Chevron className="pointer-events-none absolute top-[10px] right-1 text-[#6e6e6e]" />
        </div>
        <div className="ml-[15px] flex gap-[14px] text-[#a5a5a5]">
          {filterIcons.map((f) => (
            <button key={f.name} type="button" aria-label={f.name}>
              <svg width="16" height="16" viewBox="0 0 16 16" className="block overflow-visible">{f.icon}</svg>
            </button>
          ))}
        </div>
        <button type="button" aria-label="Toggle filtering" className="ml-auto">
          <svg width="10" height="22" viewBox="0 0 10 22">
            <path d="M.5 5H9.500V21H.5z" fill="#4a4a4a" />
            <circle cx="5" cy="5" r="5" fill="#a5a5a5" />
          </svg>
        </button>
      </div>
      <div className="flex h-[35px] shrink-0 items-center border-b border-[#3f3f3f] bg-[#535353] pt-[4px] pr-[11px] pl-[4px]">
        <Picker label="Blend mode" value="Normal" className="h-[23px] w-[161px] bg-[#4f4f4f] text-[#858585]" />
        <span className="ml-auto pr-[6px]">Opacity:</span>
        <Percent label="Opacity" value="100%" className="h-[20px] border-[#606060] text-[#6e6e6e]" />
      </div>
      <div className="flex h-[39px] shrink-0 items-center bg-[#535353] pr-[11px] pb-[2px] pl-[8px]">
        <span className="w-[40px]">Lock:</span>
        <div className="flex gap-[11px] text-[#a5a5a5]">
          {lockIcons.map((l) => (
            <button key={l.name} type="button" aria-label={l.name}>
              <svg width="16" height="16" viewBox="0 0 16 16" className="block">{l.icon}</svg>
            </button>
          ))}
        </div>
        <span className="ml-auto pr-[6px]">Fill:</span>
        <Percent label="Fill" value="100%" className="h-[20px] border-[#606060] text-[#6e6e6e]" />
      </div>
      <div className="flex grow">
        <ul className="grow">
          <li className="flex h-[111px] border-b border-[#404040]">
            <button type="button" aria-label="Layer visibility" className="flex w-[38px] items-center justify-center bg-[#535353]">
              <svg width="16" height="10" viewBox="0 0 16 10">
                <path d="M0 5Q3.500 0 8 0 12.500 0 16 5 12.500 10 8 10 3.500 10 0 5" fill="#e0e0e0" />
                <circle cx="8" cy="5" r="3.300" fill="#444" />
                <circle cx="9" cy="4" r="1.200" fill="#e0e0e0" />
              </svg>
            </button>
            <div className="flex grow items-center bg-[#6b6b6b] pl-[4px] text-[#f0f0f0]">
              <svg width="100" height="100" viewBox="0 0 100 100">
                <path d="M.5.500H99.500V99.500H.500z" fill="#fff" stroke="#333" />
                <path d="M21 31H31V55H26V36H21z" fill="#f1d367" />
              </svg>
              <span className="ml-[13px] italic">Background</span>
              <svg width="14" height="16" viewBox="0 0 14 16" fill="none" stroke="#e0e0e0" strokeWidth="1.400" className="mr-[20px] ml-auto">
                <path d="M1.200 6.500H12.800V15H1.200zM4 6V3.500Q4.200 1 7 1 9.800 1 10 3.500V6" />
                <circle cx="7" cy="10.700" r="1.500" fill="#e0e0e0" stroke="none" />
              </svg>
            </div>
          </li>
        </ul>
        <div className="w-[20px] bg-[#4a4a4a]" />
      </div>
      <div className="flex h-[31px] shrink-0 items-center gap-[13px] border-t border-[#3f3f3f] bg-[#535353] pl-[44px] text-[#dcdcdc]">
        <button type="button" aria-label="Link layers" disabled className="w-[21px] text-[#8a8a8a]">
          <svg width="20" height="10" viewBox="0 0 20 10" fill="none" stroke="currentColor" strokeWidth="1.600">
            <path d="M9 3Q8 1 5.500 1 1.200 1 1.200 5 1.200 9 5.500 9 8 9 9 7M11 3Q12 1 14.500 1 18.800 1 18.800 5 18.800 9 14.500 9 12 9 11 7M6 5h8" />
          </svg>
        </button>
        <button type="button" disabled className="flex w-[21px] items-end pl-1 text-base leading-5 text-[#8a8a8a] italic">
          fx
        </button>
        <button type="button" aria-label="Add mask" className="w-[21px] pl-[2px]">
          <svg width="16" height="13" viewBox="0 0 16 13">
            <path d="M0 0H16V13H0z" fill="currentColor" />
            <circle cx="8" cy="6.500" r="3.800" fill="#4a4a4a" />
          </svg>
        </button>
        <button type="button" aria-label="New adjustment" className="w-[21px] pl-[2px]">
          <svg width="20" height="18" viewBox="0 0 20 18">
            <circle cx="7" cy="8.500" r="6.200" {...stroke} strokeWidth="1.400" />
            <path d="M11.500 4A6.300 6.300 0 1 0 2.500 13z" fill="currentColor" />
            <path d="M13.500 16h4.500l-2.200 2z" fill="#fff" />
          </svg>
        </button>
        <button type="button" aria-label="New group" className="w-[21px] pl-[2px]">
          <svg width="16" height="13" viewBox="0 0 16 13" fill="currentColor">
            <path d="M0 1H6L7.500 2.500H15.500V13H0z" />
          </svg>
        </button>
        <button type="button" aria-label="New layer" className="w-[21px] pl-[2px]">
          <svg width="14" height="14" viewBox="0 0 14 14" fill="none" stroke="currentColor" strokeWidth="1.600">
            <path d="M1 7V1H13V13H7zM1 7H7V13" />
          </svg>
        </button>
        <button type="button" aria-label="Delete layer" disabled className="w-[21px] pl-[2px] text-[#8a8a8a]">
          <svg width="14" height="15" viewBox="0 0 14 15" fill="none" stroke="currentColor" strokeWidth="1.400">
            <path d="M0 3H14M4.500 2.500V.8H9.500V2.500M2 3.500V14H12V3.500M4.800 5V12.500M7 5V12.500M9.200 5V12.500" />
          </svg>
        </button>
      </div>
    </section>
  )
}

export default function App() {
  return (
    <div className="flex h-screen flex-col overflow-hidden bg-[#535353] font-['Open_Sans','Noto_Sans',sans-serif]">
      <MenuBar />
      <OptionsBar />
      <div className="flex min-h-0 grow">
        <ToolBar />
        <DocumentArea />
        <IconDock />
        <div className="flex w-[303px] shrink-0 flex-col border-r border-l-2 border-[#2e2e2e] bg-[#535353]">
          <div className="flex h-[15px] shrink-0 items-center justify-end border-b border-[#383838] bg-[#424242] pr-[8px]">
            <DoubleArrow />
          </div>
          <ColorPanel />
          <LayersPanel />
        </div>
      </div>
      <div className="flex h-[2px] shrink-0 bg-[#151010]">
        <span className="ml-[60px] w-[430px] bg-[#e8e8e8]" />
        <span className="ml-[374px] w-[61px] bg-[#444]" />
      </div>
    </div>
  )
}
